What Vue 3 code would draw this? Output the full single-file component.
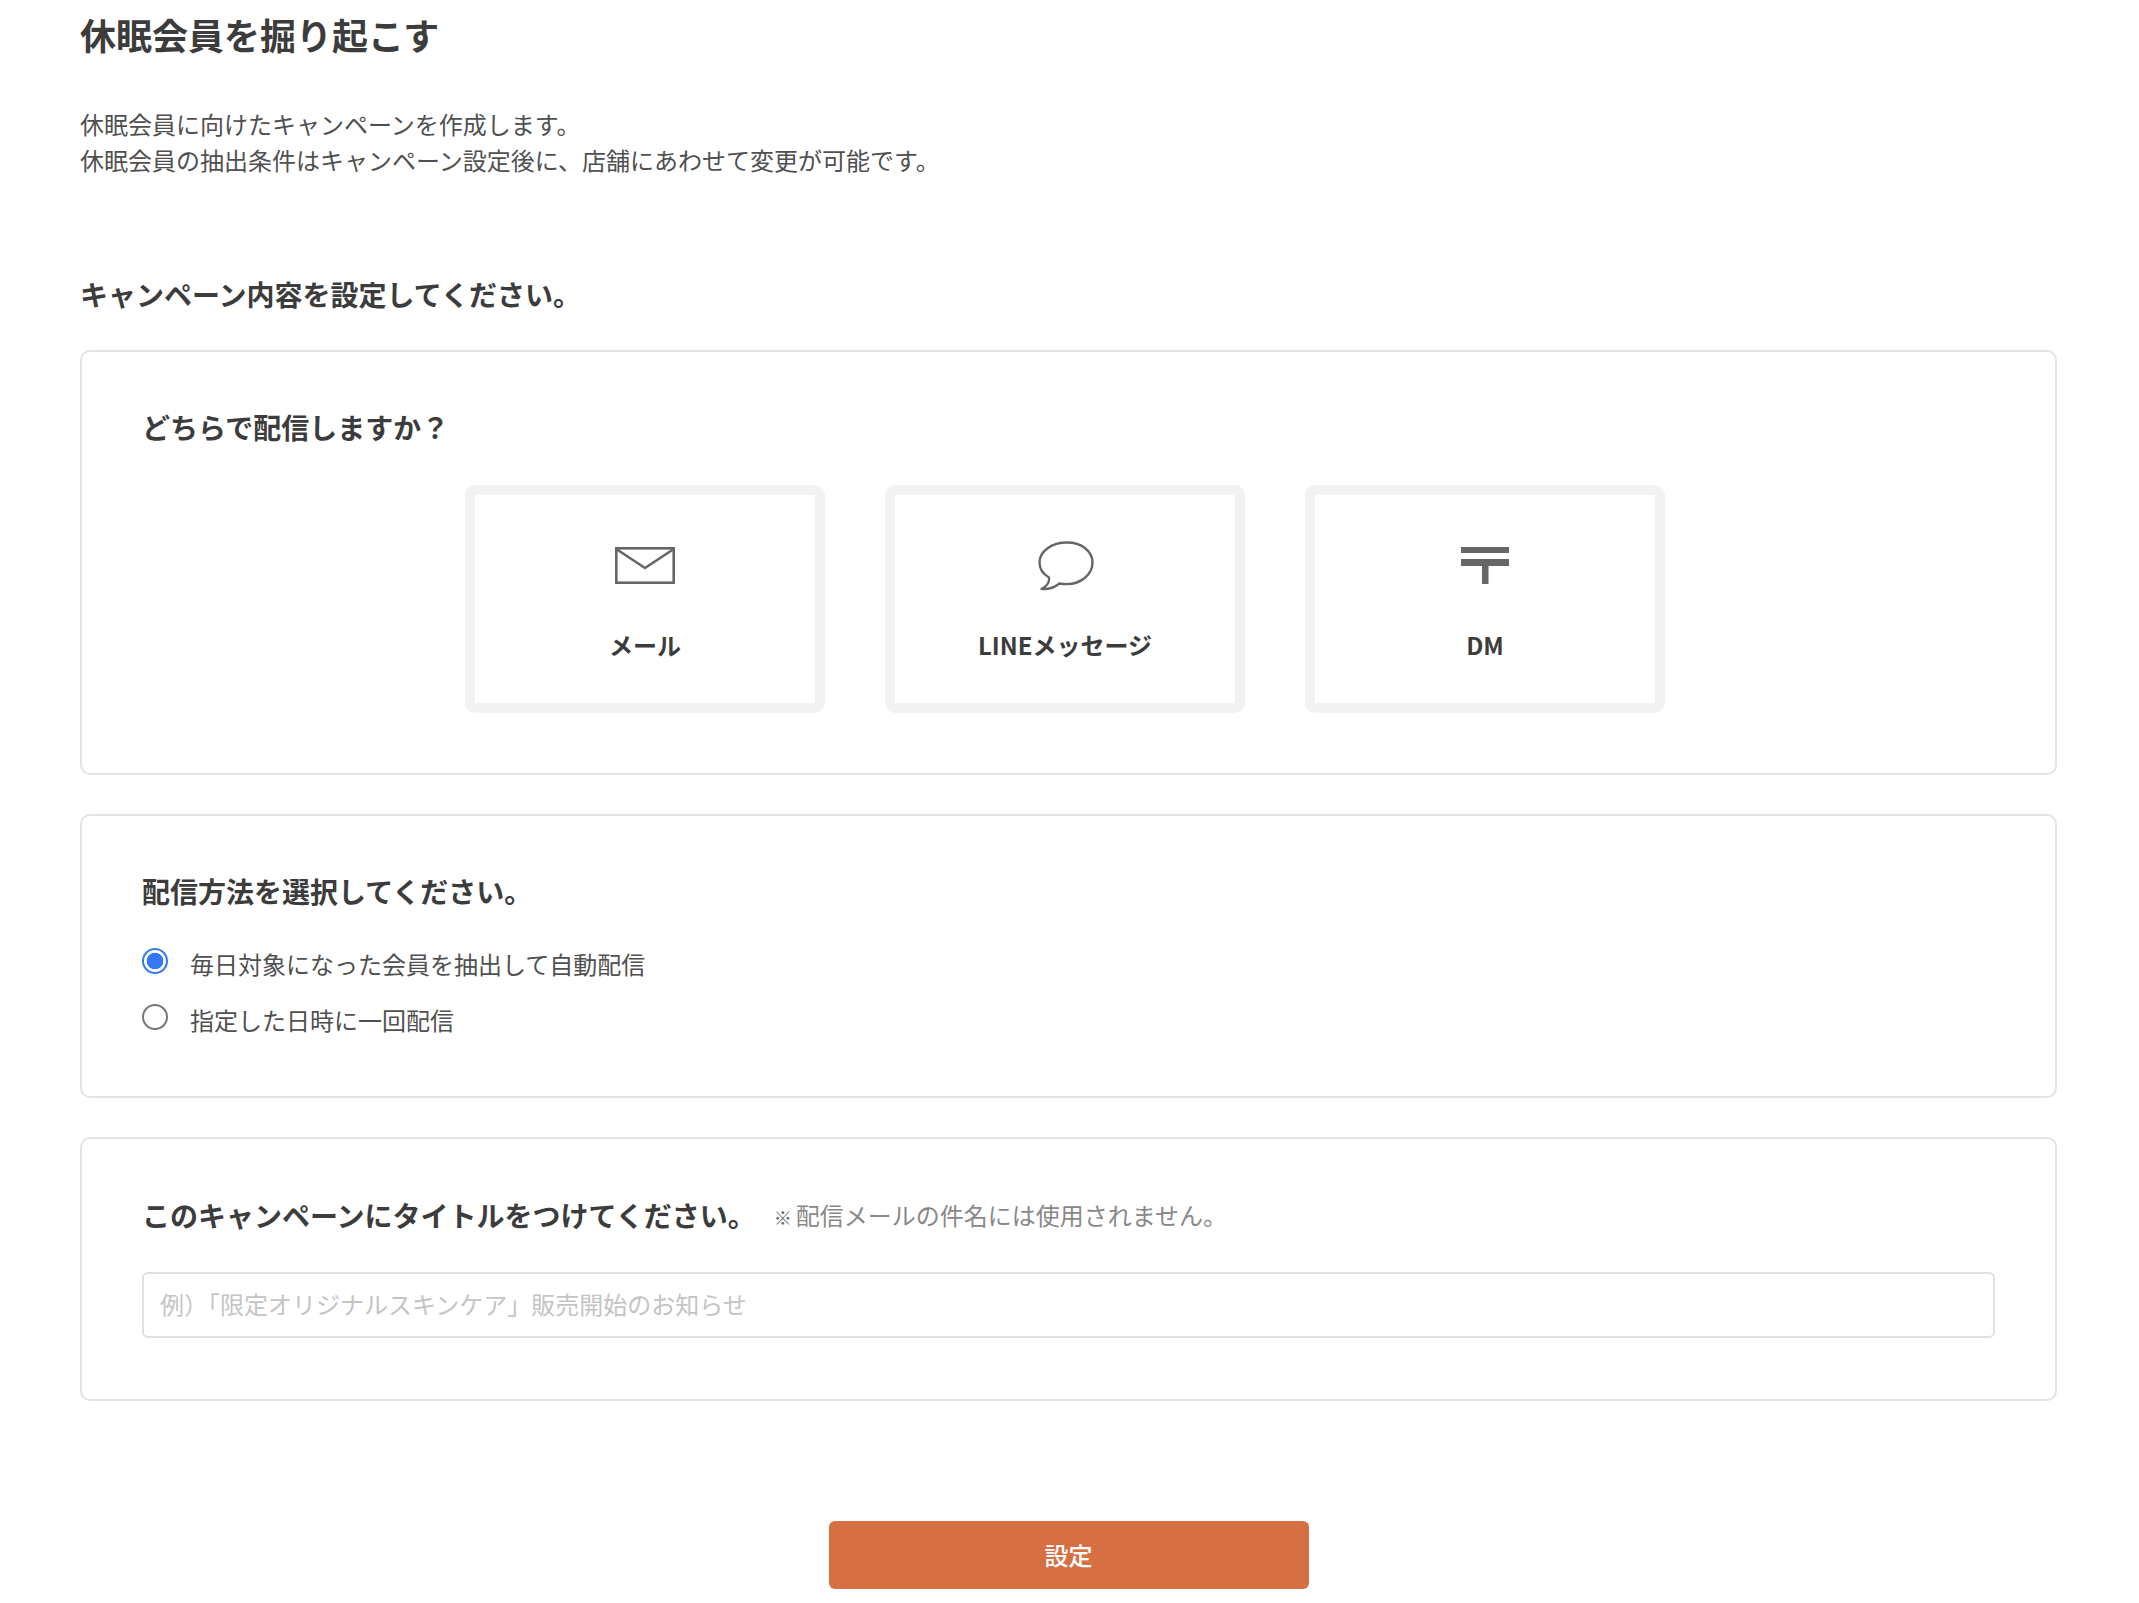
<script setup>
const channels = [
  { key: 'mail', label: 'メール' },
  { key: 'line', label: 'LINEメッセージ' },
  { key: 'dm', label: 'DM' },
]
const methods = [
  { label: '毎日対象になった会員を抽出して自動配信', checked: true },
  { label: '指定した日時に一回配信', checked: false },
]
</script>

<template>
  <main class="page">
    <h1 class="title">休眠会員を掘り起こす</h1>
    <p class="desc">休眠会員に向けたキャンペーンを作成します。<br />休眠会員の抽出条件はキャンペーン設定後に、店舗にあわせて変更が可能です。</p>
    <h2 class="section">キャンペーン内容を設定してください。</h2>

    <section class="card card-channel">
      <h3 class="heading">どちらで配信しますか？</h3>
      <div class="tiles">
        <button v-for="c in channels" :key="c.key" class="tile" type="button">
          <span class="icon">
            <svg v-if="c.key === 'mail'" class="flat" width="60" height="37" viewBox="0 0 60 37" fill="none" stroke="#666" stroke-width="2.6">
              <rect x="1.3" y="1.3" width="57.4" height="34.4" />
              <path d="M2 2.5 30 21 58 2.5" />
            </svg>
            <svg v-else-if="c.key === 'line'" class="bubble" width="56" height="50" viewBox="0 0 56 50" fill="none" stroke="#666" stroke-width="2.4" stroke-linejoin="round">
              <path d="M29 1.5C14 1.5 1.5 10 1.5 21.5c0 6 3.5 11.5 9.5 15 .6 4-2 8.500-7.500 11.500 6.500.5 13-1.500 18-5.500 2.500.4 5 .6 7.500.6C43 43 54.500 33.500 54.500 21.500 54.500 10 43.500 1.500 29 1.500Z" />
            </svg>
            <svg v-else class="flat" width="48" height="37" viewBox="0 0 48 37" fill="#666">
              <rect x="0" y="0" width="48" height="6" />
              <rect x="0" y="12" width="48" height="7" />
              <rect x="21" y="19" width="6.500" height="18" />
            </svg>
          </span>
          <span class="tile-label">{{ c.label }}</span>
        </button>
      </div>
    </section>

    <section class="card card-method">
      <h3 class="heading">配信方法を選択してください。</h3>
      <div class="options">
        <label v-for="m in methods" :key="m.label" class="option">
          <input class="radio" type="radio" name="method" :checked="m.checked" />
          <span>{{ m.label }}</span>
        </label>
      </div>
    </section>

    <section class="card card-name">
      <div class="name-head">
        <h3 class="heading">このキャンペーンにタイトルをつけてください。</h3>
        <span class="note"><span class="mark">※</span>配信メールの件名には使用されません。</span>
      </div>
      <input class="text-input" type="text" placeholder="例）「限定オリジナルスキンケア」販売開始のお知らせ" />
    </section>

    <div class="actions">
      <button class="submit" type="button">設定</button>
    </div>
  </main>
</template>

<style scoped>
.page {
  box-sizing: border-box;
  width: 2139px;
  height: 1603px;
  padding: 9px 82px 0 80px;
  overflow: hidden;
  background: #fff;
  color: #3c3c3c;
  font-family: "Noto Sans CJK JP", "Noto Sans", sans-serif;
}
.title {
  margin: 0;
  font-size: 36px;
  line-height: 50px;
  font-weight: 700;
}
.desc {
  margin: 47px 0 0;
  font-size: 24px;
  line-height: 36px;
  font-weight: 400;
  color: #505050;
}
.section {
  margin: 96px 0 36px;
  font-size: 28px;
  line-height: 40px;
  font-weight: 700;
}
.card {
  box-sizing: border-box;
  border: 2px solid #e3e3e3;
  border-radius: 10px;
  padding: 55px 60px 56px;
  margin-bottom: 39px;
}
.card-channel {
  height: 425px;
}
.card-method {
  height: 284px;
}
.card-name {
  height: 264px;
  padding-top: 56px;
  margin-bottom: 120px;
}
.heading {
  margin: 0;
  font-size: 28px;
  line-height: 40px;
  font-weight: 700;
}
.tiles {
  display: flex;
  justify-content: center;
  gap: 60px;
  margin: 38px 7px 0 0;
}
.tile {
  box-sizing: border-box;
  width: 360px;
  height: 228px;
  padding: 0;
  border: 10px solid #f2f2f2;
  border-radius: 10px;
  background: #fff;
  color: inherit;
  font-family: inherit;
  display: flex;
  flex-direction: column;
  align-items: center;
}
.icon {
  height: 50px;
  margin-top: 46px;
  display: flex;
  align-items: center;
  justify-content: center;
}
.flat {
  margin-top: -1px;
}
.bubble {
  margin-left: 1px;
}
.tile-label {
  margin-top: 36px;
  font-size: 24px;
  line-height: 36px;
  font-weight: 700;
}
.options {
  display: flex;
  flex-direction: column;
  gap: 20px;
  margin-top: 35px;
}
.option {
  display: flex;
  align-items: center;
  gap: 22px;
  height: 36px;
  font-size: 24px;
  line-height: 36px;
  color: #505050;
}
.radio {
  appearance: none;
  box-sizing: border-box;
  flex: none;
  width: 26px;
  height: 26px;
  margin: -6px 0 0;
  border: 2px solid #767676;
  border-radius: 50%;
  background: #fff;
}
.radio:checked {
  border-color: #3478f6;
  background: radial-gradient(circle, #3478f6 0 8px, #fff 8.6px);
}
.name-head {
  display: flex;
  align-items: center;
  gap: 18px;
  height: 40px;
}
.note {
  padding-top: 2px;
  font-size: 24px;
  line-height: 40px;
  color: #888;
}
.mark {
  font-size: 18px;
  margin-right: 4px;
  color: #666;
}
.text-input {
  box-sizing: border-box;
  display: block;
  width: 100%;
  height: 66px;
  margin-top: 37px;
  padding: 0 16px 4px;
  border: 2px solid #e0e0e0;
  border-radius: 6px;
  outline: none;
  background: #fff;
  font-family: inherit;
  font-size: 24px;
}
.text-input::placeholder {
  color: #c4c4c4;
  opacity: 1;
}
.actions {
  display: flex;
  justify-content: center;
}
.submit {
  width: 480px;
  height: 68px;
  padding: 0 0 2px;
  border: none;
  border-radius: 6px;
  background: #d67043;
  color: #fff;
  font-family: inherit;
  font-size: 24px;
  font-weight: 500;
}
</style>
